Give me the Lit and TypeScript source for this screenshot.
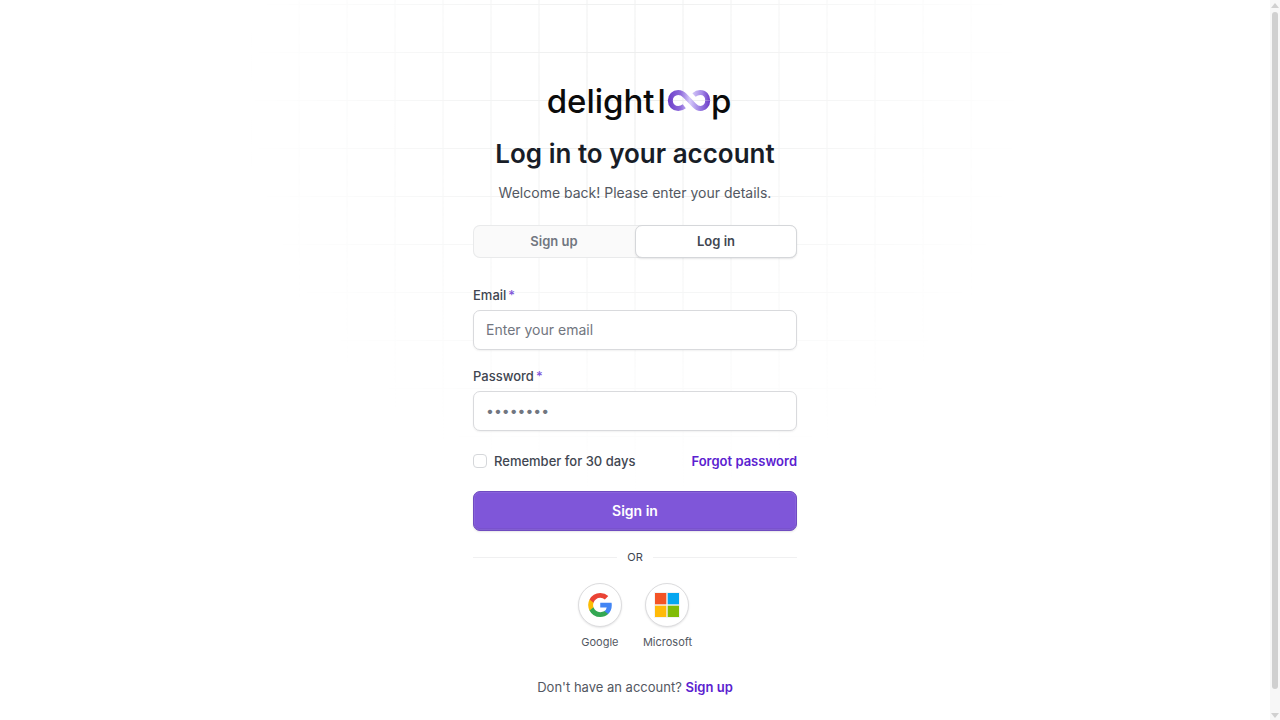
import { LitElement, html, css, svg } from "lit";
import { customElement, property } from "lit/decorators.js";

const lines = Array.from({ length: 20 }, (_, i) => i * 48);

@customElement("grid-pattern")
class GridPattern extends LitElement {
  static styles = css`
    :host {
      display: block;
    }
    .pattern {
      display: block;
      width: 768px;
      height: 912px;
    }
  `;
  render() {
    return html`<svg class="pattern" viewBox="0 0 768 912" fill="none" aria-hidden="true">
      <defs>
        <radialGradient id="fade" gradientUnits="userSpaceOnUse" cx="384" cy="480" r="390">
          <stop stop-color="#fff"></stop>
          <stop offset="1" stop-color="#fff" stop-opacity="0"></stop>
        </radialGradient>
        <mask id="m" maskUnits="userSpaceOnUse" x="0" y="0" width="768" height="912">
          <rect width="768" height="912" fill="url(#fade)"></rect>
        </mask>
      </defs>
      <g mask="url(#m)" stroke="#ebecec">
        ${lines.map((n) => svg`<path d="M${n} 0V912M0 ${n + 0.5}H768"></path>`)}
      </g>
    </svg>`;
  }
}

@customElement("brand-logo")
class BrandLogo extends LitElement {
  static styles = css`
    .logo {
      display: flex;
      justify-content: center;
      align-items: center;
      height: 38px;
      padding-left: 8px;
      font: 500 33px/38px "Inter", sans-serif;
      color: #0b0b0b;
    }
    .loop {
      display: block;
      width: 44px;
      height: 24px;
      margin-left: 1px;
    }
    .stem {
      margin-left: 3px;
    }
  `;
  render() {
    return html`<div class="logo" role="img" aria-label="delightloop">
      <span>delight</span><span class="stem">l</span>
      <svg class="loop" viewBox="0 0 44 24" fill="none" aria-hidden="true">
        <defs>
          <linearGradient id="a" gradientUnits="userSpaceOnUse" x1="1" y1="12" x2="43" y2="12">
            <stop stop-color="#6d3fc9"></stop>
            <stop offset=".3" stop-color="#8f6cdb"></stop>
            <stop offset=".52" stop-color="#d5c9fa"></stop>
            <stop offset=".75" stop-color="#9c80e3"></stop>
            <stop offset="1" stop-color="#6b3cc7"></stop>
          </linearGradient>
          <linearGradient id="b" gradientUnits="userSpaceOnUse" x1="26" y1="8" x2="43" y2="8">
            <stop stop-color="#cfc2f6"></stop>
            <stop offset=".5" stop-color="#a78de8"></stop>
            <stop offset="1" stop-color="#6b3cc7"></stop>
          </linearGradient>
        </defs>
        <path
          d="M17.300 17.300C15.600 18.700 13.500 19.500 11.200 19.500C6.800 19.500 3.300 16 3.300 11.500S6.800 3.500 11.200 3.500C14 3.500 16 4.700 18 6.700L27 16.100C29 18.300 31 19.500 33.500 19.500C37.600 19.500 40.700 16 40.700 11.500"
          stroke="url(#a)"
          stroke-width="5"
        ></path>
        <path
          d="M40.700 11.500C40.700 7 37.600 3.500 33.200 3.500C30.800 3.500 28.800 4.400 27 6"
          stroke="url(#b)"
          stroke-width="5"
        ></path>
      </svg>
      <span>p</span>
    </div>`;
  }
}

@customElement("social-button")
class SocialButton extends LitElement {
  @property() name = "";
  static styles = css`
    .item {
      display: grid;
      justify-items: center;
      gap: 6px;
      color: #535862;
      font: 400 11px/18px "Inter", sans-serif;
    }
    .circle {
      display: grid;
      place-items: center;
      width: 44px;
      height: 44px;
      padding: 0;
      border: 1px solid #dcdcde;
      border-radius: 50%;
      background: #fff;
      box-shadow: 0 1px 2px rgba(10, 13, 18, 0.1);
    }
    .icon {
      display: block;
      width: 26px;
      height: 26px;
    }
  `;
  icon() {
    return this.name === "Google"
      ? html`<svg class="icon" viewBox="-1 -1 26 26" aria-hidden="true">
          <path fill="#4285F4" d="M23.766 12.276c0-.815-.066-1.636-.207-2.438H12.240v4.621h6.482a5.554 5.554 0 0 1-2.399 3.647v2.999h3.867c2.271-2.090 3.576-5.177 3.576-8.829Z"></path>
          <path fill="#34A853" d="M12.240 24.001c3.237 0 5.966-1.063 7.955-2.897l-3.867-2.998c-1.076.732-2.465 1.146-4.084 1.146-3.131 0-5.786-2.112-6.738-4.952H1.517v3.091a12.002 12.002 0 0 0 10.723 6.610Z"></path>
          <path fill="#FBBC04" d="M5.503 14.300a7.188 7.188 0 0 1 0-4.594V6.615H1.517a12.010 12.010 0 0 0 0 10.776l3.986-3.091Z"></path>
          <path fill="#EA4335" d="M12.240 4.750a6.521 6.521 0 0 1 4.603 1.799l3.427-3.426A11.533 11.533 0 0 0 12.240 0 12.001 12.001 0 0 0 1.517 6.615l3.986 3.091C6.450 6.862 9.109 4.750 12.240 4.750Z"></path>
        </svg>`
      : html`<svg class="icon" viewBox="0 0 26 26" aria-hidden="true">
          <path fill="#f3f3f3" d="M0 0h26v26H0z"></path>
          <path fill="#f35325" d="M1 1h11.300v11.300H1z"></path>
          <path fill="#05a6f0" d="M13.700 1H25v11.300H13.700z"></path>
          <path fill="#ffba08" d="M1 13.700h11.300V25H1z"></path>
          <path fill="#81bc06" d="M13.700 13.700H25V25H13.700z"></path>
        </svg>`;
  }
  render() {
    return html`<div class="item">
      <button class="circle" type="button" aria-labelledby="n">${this.icon()}</button>
      <span id="n">${this.name}</span>
    </div>`;
  }
}

@customElement("app-root")
class AppRoot extends LitElement {
  static styles = css`
    :host {
      display: grid;
      grid-template-columns: minmax(0, 1fr) 10px;
      height: 100vh;
      overflow: hidden;
      background: #fff;
      font-family: "Inter", sans-serif;
      color: #414651;
    }
    * {
      box-sizing: border-box;
    }
    .page {
      position: relative;
      overflow: hidden;
      padding: 82px 16px 48px;
    }
    .backdrop {
      position: absolute;
      top: -380px;
      left: 50%;
      transform: translateX(-50%);
    }
    .column {
      position: relative;
      max-width: 324px;
      margin: 0 auto;
    }
    .title {
      margin: 17px 0 0;
      font-size: 26px;
      line-height: 34px;
      font-weight: 600;
      text-align: center;
      color: #181d27;
    }
    .subtitle {
      margin: 11px 0 0;
      font-size: 14px;
      line-height: 22px;
      text-align: center;
      color: #535862;
    }
    .tabs {
      display: flex;
      margin-top: 21px;
      border-radius: 7px;
      background: #fafafa;
      box-shadow: inset 0 0 0 1px #e9eaeb;
    }
    .tab {
      flex: 1;
      height: 33px;
      padding: 0 0 2px;
      border: 1px solid transparent;
      border-radius: 7px;
      background: transparent;
      font: 600 13px/18px "Inter", sans-serif;
      color: #717680;
    }
    .tab.active {
      background: #fff;
      border-color: #d5d7da;
      color: #414651;
      box-shadow: 0 1px 2px rgba(10, 13, 18, 0.1);
    }
    .form {
      margin-top: 28px;
    }
    .field + .field {
      margin-top: 17px;
    }
    .label {
      display: flex;
      gap: 2px;
      font-size: 13px;
      line-height: 18px;
      font-weight: 500;
    }
    .star {
      color: #7f56d9;
    }
    .input {
      display: block;
      width: 100%;
      height: 40px;
      margin-top: 6px;
      padding: 0 12px 2px;
      border: 1px solid #d9dadd;
      border-radius: 7px;
      background: #fff;
      font: 400 14px/22px "Inter", sans-serif;
      color: #181d27;
      box-shadow: 0 1px 2px rgba(10, 13, 18, 0.06);
      outline: none;
    }
    .input::placeholder {
      color: #717680;
      opacity: 1;
    }
    .options {
      display: flex;
      justify-content: space-between;
      align-items: center;
      margin-top: 21px;
      font-size: 13px;
      line-height: 18px;
      font-weight: 500;
    }
    .remember {
      display: flex;
      align-items: center;
      gap: 7px;
    }
    .check {
      appearance: none;
      width: 14px;
      height: 14px;
      margin: 0;
      border: 1px solid #d5d7da;
      border-radius: 4px;
      background: #fff;
    }
    .link {
      color: #5b21d0;
      font-weight: 600;
      text-decoration: none;
    }
    .submit {
      display: block;
      width: 100%;
      height: 40px;
      margin-top: 21px;
      border: 1px solid #6f4bc0;
      border-radius: 7px;
      background: #7f56d9;
      color: #fff;
      font: 600 14px/22px "Inter", sans-serif;
      box-shadow:
        0 1px 2px rgba(10, 13, 18, 0.1),
        inset 0 0 0 1px rgba(255, 255, 255, 0.08),
        inset 0 -2px 0 rgba(10, 13, 18, 0.05);
    }
    .divider {
      display: flex;
      align-items: center;
      gap: 10px;
      margin-top: 17px;
      font-size: 11px;
      line-height: 18px;
    }
    .rule {
      flex: 1;
      height: 1px;
      background: #f0f0f1;
    }
    .social {
      display: flex;
      justify-content: center;
      gap: 21px;
      margin-top: 17px;
    }
    .footer {
      margin: 26px 0 0;
      font-size: 13px;
      line-height: 20px;
      text-align: center;
      color: #535862;
    }
    .scroll {
      display: flex;
      flex-direction: column;
      align-items: center;
      justify-content: space-between;
      background: #f7f7f7;
      padding: 3px 0 2px;
    }
    .arrow {
      display: block;
      width: 8px;
      height: 5px;
      fill: #d0d0d0;
    }
    .track {
      flex: 1;
      width: 6px;
      padding: 4px 0 24px;
    }
    .thumb {
      height: 100%;
      border-radius: 3px;
      background: #d0d0d0;
    }
  `;
  render() {
    return html`
      <main class="page">
        <grid-pattern class="backdrop"></grid-pattern>
        <div class="column">
          <brand-logo></brand-logo>
          <h1 class="title">Log in to your account</h1>
          <p class="subtitle">Welcome back! Please enter your details.</p>
          <div class="tabs" role="tablist">
            <button class="tab" role="tab" aria-selected="false">Sign up</button>
            <button class="tab active" role="tab" aria-selected="true">Log in</button>
          </div>
          <form class="form">
            <div class="field">
              <label class="label" for="email">Email<span class="star">*</span></label>
              <input class="input" id="email" type="email" placeholder="Enter your email" />
            </div>
            <div class="field">
              <label class="label" for="password">Password<span class="star">*</span></label>
              <input class="input" id="password" type="password" placeholder="••••••••" />
            </div>
            <div class="options">
              <label class="remember"><input class="check" type="checkbox" />Remember for 30 days</label>
              <a class="link" href="#">Forgot password</a>
            </div>
            <button class="submit" type="submit">Sign in</button>
          </form>
          <div class="divider"><span class="rule"></span><span>OR</span><span class="rule"></span></div>
          <div class="social">
            <social-button name="Google"></social-button>
            <social-button name="Microsoft"></social-button>
          </div>
          <p class="footer">Don't have an account? <a class="link" href="#">Sign up</a></p>
        </div>
      </main>
      <div class="scroll" aria-hidden="true">
        <svg class="arrow" viewBox="0 0 8 5"><path d="M4 0L8 5H0Z"></path></svg>
        <div class="track"><div class="thumb"></div></div>
        <svg class="arrow" viewBox="0 0 8 5"><path d="M0 0H8L4 5Z"></path></svg>
      </div>
    `;
  }
}
